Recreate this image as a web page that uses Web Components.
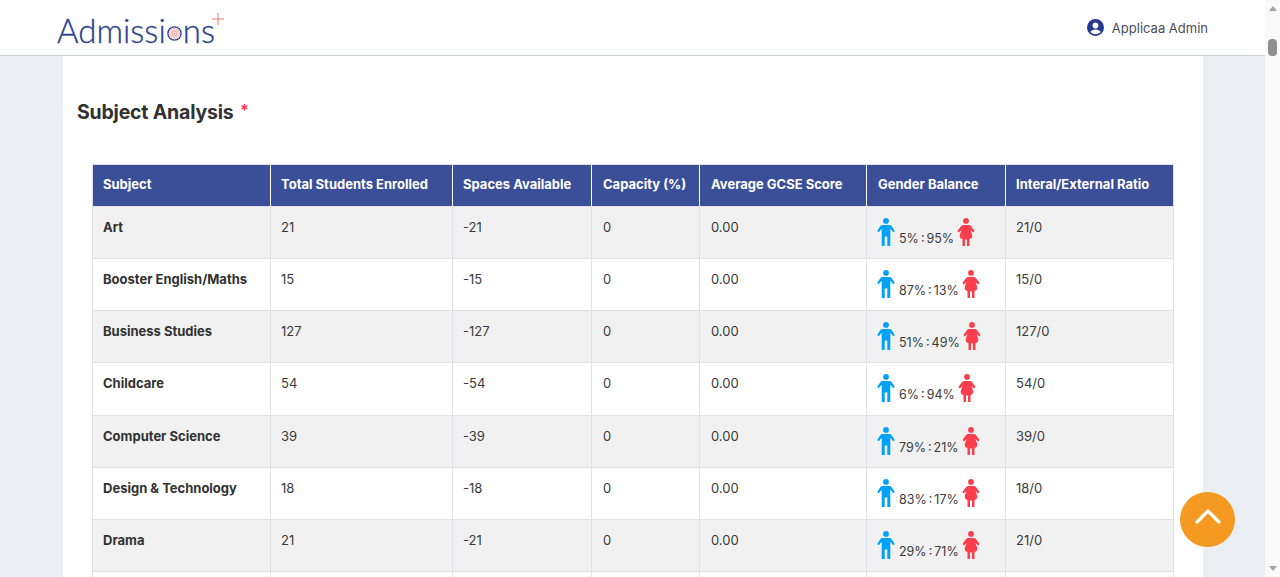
<!DOCTYPE html>
<html lang="en">
<head>
<meta charset="utf-8">
<title>Subject Analysis</title>
<style>
  html, body { margin: 0; padding: 0; height: 100%; overflow: hidden; }
  body { font-family: "Inter", "Liberation Sans", sans-serif; background: #ebeef3; }
</style>
</head>
<body>
<app-shell>
  <top-bar slot="top"></top-bar>
  <subject-analysis></subject-analysis>
</app-shell>
<back-to-top></back-to-top>

<script>
const rows = [
  ['Art', 21, -21, 0, '0.00', '5% : 95%', '21/0'],
  ['Booster English/Maths', 15, -15, 0, '0.00', '87% : 13%', '15/0'],
  ['Business Studies', 127, -127, 0, '0.00', '51% : 49%', '127/0'],
  ['Childcare', 54, -54, 0, '0.00', '6% : 94%', '54/0'],
  ['Computer Science', 39, -39, 0, '0.00', '79% : 21%', '39/0'],
  ['Design & Technology', 18, -18, 0, '0.00', '83% : 17%', '18/0'],
  ['Drama', 21, -21, 0, '0.00', '29% : 71%', '21/0']
];

const maleIcon = `<svg width="18" height="28" viewBox="0 0 18 28"><circle cx="9" cy="2.9" r="2.900" fill="#00a2f7"/><path fill="#00a2f7" d="M5.600 7h6.800c1 0 1.700.4 2.300 1.200L17.800 13l-1.500 1.300-3-3.600V28h-3v-9.500H7.700V28h-3V10.700l-3 3.600L.2 13l3.100-4.800C3.900 7.400 4.600 7 5.600 7z"/></svg>`;
const femaleIcon = `<svg width="18" height="28" viewBox="0 0 18 28"><circle cx="9" cy="2.900" r="2.900" fill="#f93e4e"/><path fill="#f93e4e" d="M6.200 7h5.600c.9 0 1.600.4 2.100 1.100l3.700 5-1.400 1.300-2.700-2.500c.3 1.300 1.300 3.300 1.700 4.900.3 1.600-.1 3-1.200 3.700l-1.500.6V28H10v-6.500H8V28H5.500v-6.900L4 20.500c-1.100-.7-1.500-2.100-1.200-3.700.4-1.600 1.400-3.600 1.700-4.900l-2.700 2.500-1.400-1.300 3.700-5C4.600 7.400 5.300 7 6.200 7z"/></svg>`;

class AppShell extends HTMLElement {
  constructor() {
    super();
    this.attachShadow({ mode: 'open' });
  }

  connectedCallback() {
    this.shadowRoot.innerHTML = `
      <style>
        :host {
          display: flex;
          height: 100vh;
          overflow: hidden;
        }
        .page {
          flex: 1;
          min-width: 0;
          display: flex;
          flex-direction: column;
          overflow: hidden;
        }
        .scrollbar {
          width: 15px;
          background: #fafafa;
          display: flex;
          flex-direction: column;
          align-items: center;
          flex: none;
        }
        .up, .down {
          width: 0;
          height: 0;
          border-left: 4px solid transparent;
          border-right: 4px solid transparent;
        }
        .up { border-bottom: 5px solid #a3a3a3; margin-top: 6px; }
        .thumb {
          width: 9px;
          height: 17px;
          border-radius: 4px;
          background: #8f8f8f;
          margin-top: 28px;
        }
        .down { border-top: 5px solid #a3a3a3; margin-top: auto; margin-bottom: 6px; }
      </style>
      <div class="page"><slot name="top"></slot><slot></slot></div>
      <div class="scrollbar"><div class="up"></div><div class="thumb"></div><div class="down"></div></div>
    `;
  }
}

class TopBar extends HTMLElement {
  constructor() {
    super();
    this.attachShadow({ mode: 'open' });
  }

  connectedCallback() {
    this.shadowRoot.innerHTML = `
      <style>
        :host {
          display: flex;
          flex: none;
          height: 55px;
          background: #fff;
          border-bottom: 1px solid #ccd2d8;
          align-items: center;
          justify-content: space-between;
          padding: 0 57px 0 57px;
        }
        .logo {
          position: relative;
          font-family: "Lato", sans-serif;
          font-size: 33px;
          font-weight: 300;
          -webkit-text-stroke: .3px #2b3f8f;
          color: #2b3f8f;
          line-height: 1;
          display: flex;
          align-items: center;
          margin-top: 5px;
        }
        .target {
          display: inline-flex;
          width: 15px;
          height: 15px;
          margin: 7px 1px 0 1px;
        }
        .plus {
          position: absolute;
          right: -9px;
          top: -1px;
        }
        .user {
          display: flex;
          align-items: center;
          gap: 8px;
          font-size: 13px;
          color: #4b4b55;
        }
      </style>
      <div class="logo">
        Admissi<span class="target"><svg width="15" height="15" viewBox="0 0 15 15">
          <circle cx="7.500" cy="7.500" r="6.600" fill="none" stroke="#2b3f8f" stroke-width="1.300"/>
          <circle cx="7.500" cy="7.500" r="4.700" fill="none" stroke="#f29a90" stroke-width="1"/>
          <circle cx="7.500" cy="7.500" r="2.600" fill="none" stroke="#ef8378" stroke-width="1"/>
          <circle cx="7.500" cy="7.500" r=".9" fill="#ef8378"/>
        </svg></span>ns
        <svg class="plus" width="12" height="12" viewBox="0 0 12 12"><path d="M6 0v12M0 6h12" stroke="#ef7b70" stroke-width="1"/></svg>
      </div>
      <div class="user">
        <svg width="17" height="17" viewBox="0 0 17 17">
          <circle cx="8.500" cy="8.500" r="8.500" fill="#26388f"/>
          <circle cx="8.500" cy="6.500" r="2.900" fill="#fff"/>
          <path d="M3.300 13c.9-1.700 2.900-2.600 5.200-2.600s4.300.9 5.200 2.600c-1.300 1.400-3.100 2.200-5.200 2.200S4.600 14.400 3.300 13z" fill="#fff"/>
        </svg>
        <span>Applicaa Admin</span>
      </div>
    `;
  }
}

class SubjectAnalysis extends HTMLElement {
  constructor() {
    super();
    this.attachShadow({ mode: 'open' });
  }

  connectedCallback() {
    const body = rows.map(r => `
      <tr>
        <td class="name">${r[0].replace('&', '&amp;')}</td>
        <td>${r[1]}</td>
        <td>${r[2]}</td>
        <td>${r[3]}</td>
        <td>${r[4]}</td>
        <td class="gender"><gender-balance>${r[5]}</gender-balance></td>
        <td>${r[6]}</td>
      </tr>`).join('');
    // next row only shows its top edge in the window
    const nextRow = '<tr>' + '<td></td>'.repeat(7) + '</tr>';

    this.shadowRoot.innerHTML = `
      <style>
        :host {
          display: block;
          flex: 1;
          min-height: 0;
          margin: 0 62px 0 63px;
          background: #fff;
          padding: 43px 29px 0 14px;
          overflow: hidden;
        }
        h2 {
          margin: 0 0 39px;
          font-size: 19.500px;
          line-height: 26px;
          font-weight: 700;
          letter-spacing: -.2px;
          color: #313131;
        }
        h2 span { color: #f8374b; font-size: 16px; font-weight: 700; margin-left: 2px; line-height: 1; vertical-align: 3px; }
        table {
          margin-left: 15px;
          width: 1082px;
          border-collapse: collapse;
          table-layout: fixed;
          font-size: 13px;
          line-height: 16px;
          color: #3a3a3a;
        }
        th, td {
          border: 1px solid #dfe1e6;
          text-align: left;
          padding: 0 10px;
        }
        th {
          background: #3b4f99;
          color: #fff;
          height: 38px;
          padding-bottom: 3px;
          font-weight: 700;
          border-left-color: #fff;
          border-right-color: #fff;
        }
        th:first-child { border-left-color: #dfe1e6; }
        th:last-child { border-right-color: #dfe1e6; }
        th:nth-child(n+4):nth-child(-n+6),
        td:nth-child(n+4):nth-child(-n+5) { padding-left: 11px; }
        td {
          height: 52.140px;
          box-sizing: border-box;
          vertical-align: top;
          padding-top: 12px;
        }
        tbody tr:nth-child(odd) td { background: #f1f1f1; }
        .name { font-weight: 700; color: #313131; }
        td.gender { padding-top: 11px; }
      </style>
      <h2>Subject Analysis <span>*</span></h2>
      <table>
        <colgroup>
          <col style="width:178px"><col style="width:182px"><col style="width:139px"><col style="width:108px"><col style="width:167px"><col style="width:139px"><col style="width:168px">
        </colgroup>
        <thead>
          <tr>
            <th>Subject</th>
            <th>Total Students Enrolled</th>
            <th>Spaces Available</th>
            <th>Capacity (%)</th>
            <th>Average GCSE Score</th>
            <th>Gender Balance</th>
            <th>Interal/External Ratio</th>
          </tr>
        </thead>
        <tbody>${body}${nextRow}</tbody>
      </table>
    `;
  }
}

class GenderBalance extends HTMLElement {
  constructor() {
    super();
    this.attachShadow({ mode: 'open' });
  }

  connectedCallback() {
    this.shadowRoot.innerHTML = `
      <style>
        :host {
          display: flex;
          align-items: flex-end;
          gap: 3px;
        }
        svg { display: block; flex: none; }
        span { line-height: 16px; font-size: 12.500px; word-spacing: -1.500px; margin: 0 0 -1px 1px; }
      </style>
      ${maleIcon}<span><slot></slot></span>${femaleIcon}
    `;
  }
}

class BackToTop extends HTMLElement {
  constructor() {
    super();
    this.attachShadow({ mode: 'open' });
  }

  connectedCallback() {
    this.shadowRoot.innerHTML = `
      <style>
        :host {
          position: fixed;
          left: 1180px;
          top: 492px;
          width: 55px;
          height: 55px;
          border-radius: 50%;
          background: #f49a23;
          display: flex;
          align-items: center;
          justify-content: center;
        }
        svg { margin-bottom: 7px; }
      </style>
      <svg width="26" height="16" viewBox="0 0 26 16"><path d="M2 14L13 3l11 11" fill="none" stroke="#fff" stroke-width="3.200" stroke-linecap="round" stroke-linejoin="round"/></svg>
    `;
  }
}

customElements.define('app-shell', AppShell);
customElements.define('top-bar', TopBar);
customElements.define('subject-analysis', SubjectAnalysis);
customElements.define('gender-balance', GenderBalance);
customElements.define('back-to-top', BackToTop);
</script>
</body>
</html>
